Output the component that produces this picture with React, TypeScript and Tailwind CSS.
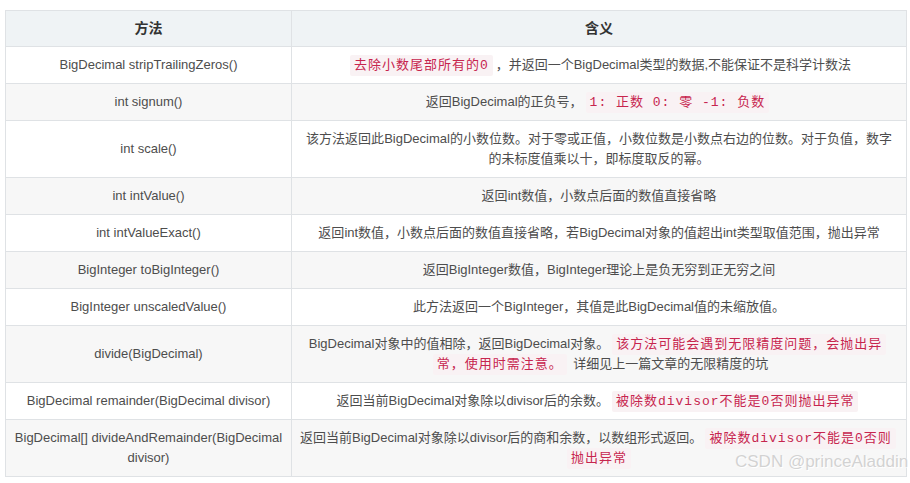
import React from "react";

type Seg = { t: string; code?: boolean };

const rows: { m: string; d: Seg[] }[] = [
  {
    m: "BigDecimal stripTrailingZeros()",
    d: [
      { t: "去除小数尾部所有的0", code: true },
      { t: "，并返回一个BigDecimal类型的数据,不能保证不是科学计数法" },
    ],
  },
  {
    m: "int signum()",
    d: [{ t: "返回BigDecimal的正负号，" }, { t: "1: 正数 0: 零 -1: 负数", code: true }],
  },
  {
    m: "int scale()",
    d: [
      {
        t: "该方法返回此BigDecimal的小数位数。对于零或正值，小数位数是小数点右边的位数。对于负值，数字的未标度值乘以十，即标度取反的幂。",
      },
    ],
  },
  { m: "int intValue()", d: [{ t: "返回int数值，小数点后面的数值直接省略" }] },
  {
    m: "int intValueExact()",
    d: [{ t: "返回int数值，小数点后面的数值直接省略，若BigDecimal对象的值超出int类型取值范围，抛出异常" }],
  },
  {
    m: "BigInteger toBigInteger()",
    d: [{ t: "返回BigInteger数值，BigInteger理论上是负无穷到正无穷之间" }],
  },
  {
    m: "BigInteger unscaledValue()",
    d: [{ t: "此方法返回一个BigInteger，其值是此BigDecimal值的未缩放值。" }],
  },
  {
    m: "divide(BigDecimal)",
    d: [
      { t: "BigDecimal对象中的值相除，返回BigDecimal对象。" },
      { t: "该方法可能会遇到无限精度问题，会抛出异常，使用时需注意。", code: true },
      { t: " 详细见上一篇文章的无限精度的坑" },
    ],
  },
  {
    m: "BigDecimal remainder(BigDecimal divisor)",
    d: [{ t: "返回当前BigDecimal对象除以divisor后的余数。" }, { t: "被除数divisor不能是0否则抛出异常", code: true }],
  },
  {
    m: "BigDecimal[] divideAndRemainder(BigDecimal divisor)",
    d: [
      { t: "返回当前BigDecimal对象除以divisor后的商和余数，以数组形式返回。" },
      { t: "被除数divisor不能是0否则抛出异常", code: true },
    ],
  },
];

function runs(s: string) {
  return s.split(/([\u0000-\u00ff]+)/).filter((x) => x.length > 0);
}

function Text({ t }: { t: string }) {
  return (
    <>
      {runs(t).map((r, k) =>
        /^[\u0000-\u00ff]+$/.test(r) ? (
          <span key={k}>{r}</span>
        ) : (
          <span key={k} className="leading-none">
            {r}
          </span>
        )
      )}
    </>
  );
}

export default function App() {
  return (
    <div
      className="relative w-[910px] h-[483px] bg-white pl-[5px] pt-[10px] text-[13px] leading-[20px] text-[#4d4d4d]"
      style={{ fontFamily: '"Liberation Sans", "Noto Sans CJK SC", sans-serif' }}
    >
      <table className="w-[901px] table-fixed border-collapse">
        <colgroup>
          <col className="w-[286px]" />
          <col className="w-[615px]" />
        </colgroup>
        <thead>
          <tr className="bg-[#eff3f5]">
            <th className="border border-[#dfe2e5] px-2 pt-[8px] pb-[7px] text-center font-bold text-[#333]">
              <span className="text-[14px] leading-none">方法</span>
            </th>
            <th className="border border-[#dfe2e5] px-2 pt-[8px] pb-[7px] text-center font-bold text-[#333]">
              <span className="text-[14px] leading-none">含义</span>
            </th>
          </tr>
        </thead>
        <tbody>
          {rows.map((r, i) => (
            <tr key={i} className={i % 2 === 0 ? "bg-white" : "bg-[#f7f7f7]"}>
              <td className="border border-[#dfe2e5] px-2 py-2 text-center align-middle">{r.m}</td>
              <td className="border border-[#dfe2e5] px-2 py-2 text-center align-middle">
                {r.d.map((s, j) =>
                  s.code ? (
                    <code
                      key={j}
                      className="mx-[3px] rounded-[2px] bg-[#f9f2f4] px-[4px] py-[3px] text-[13px] leading-none text-[#c7254e] box-decoration-clone tracking-[1px]"
                      style={{ fontFamily: '"Liberation Mono", "Noto Sans CJK SC", monospace' }}
                    >
                      {s.t}
                    </code>
                  ) : (
                    <Text key={j} t={s.t} />
                  )
                )}
              </td>
            </tr>
          ))}
        </tbody>
      </table>
      <div
        className="absolute left-[735px] top-[452px] whitespace-nowrap text-[17px] leading-[20px] text-[#d2d2d2]"
        style={{ textShadow: "0 0 1px #fff, 1px 1px 0 #fff" }}
      >
        CSDN @princeAladdin
      </div>
    </div>
  );
}
